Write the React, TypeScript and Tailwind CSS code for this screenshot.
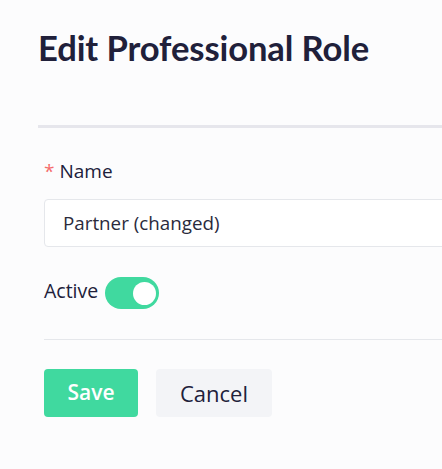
import { useState } from 'react';

export default function App() {
  const [name, setName] = useState('Partner (changed)');
  const [active, setActive] = useState(true);

  return (
    <div
      className="min-h-screen w-full overflow-hidden bg-[#fcfcfd] text-[#20203a]"
      style={{ fontFamily: '"Open Sans", "Noto Sans", sans-serif' }}
    >
      <div className="w-[700px] pl-[38px]">
        {/* Header */}
        <h1
          className="pt-[26px] text-[34.6px] font-bold leading-[44px] tracking-[-0.1px]"
          style={{ fontFamily: 'Lato, "Open Sans", sans-serif' }}
        >
          Edit Professional Role
        </h1>
        <div className="mt-[55px] h-[3px] bg-[#e6e6ec]" />

        {/* Form */}
        <form className="pl-[6px] pt-[31px]" onSubmit={(e) => e.preventDefault()}>
          <label className="flex items-center text-[19px] leading-[24px]">
            <span className="mr-[5px] text-[#f56c6c]">*</span>
            Name
          </label>
          <input
            type="text"
            value={name}
            onChange={(e) => setName(e.target.value)}
            className="mt-[16px] h-[48px] w-full rounded-[4px] border border-[#e5e7eb] bg-white px-[18px] text-[18.8px] text-[#2a2a3c] outline-none"
          />

          <div className="mt-[30px] flex items-center gap-[7px]">
            <span className="pb-[4px] text-[19.5px] leading-[24px]">Active</span>
            <button
              type="button"
              onClick={() => setActive(!active)}
              className={
                active
                  ? 'flex h-[32px] w-[54px] items-center justify-end rounded-full bg-[#40d99f] px-[3px]'
                  : 'flex h-[32px] w-[54px] items-center justify-start rounded-full bg-[#d1d5db] px-[3px]'
              }
            >
              <span className="h-[23px] w-[23px] rounded-full bg-white" />
            </button>
          </div>

          <div className="mt-[30px] h-px bg-[#e5e7eb]" />

          <div className="mt-[29px] flex gap-[18px]">
            <button
              type="submit"
              className="h-[48px] w-[94px] rounded-[4px] bg-[#40d99f] text-[21px] font-semibold text-white"
            >
              Save
            </button>
            <button
              type="button"
              className="h-[48px] w-[116px] rounded-[4px] bg-[#f3f4f7] text-[22px] text-[#20203a]"
            >
              Cancel
            </button>
          </div>
        </form>
      </div>
    </div>
  );
}
